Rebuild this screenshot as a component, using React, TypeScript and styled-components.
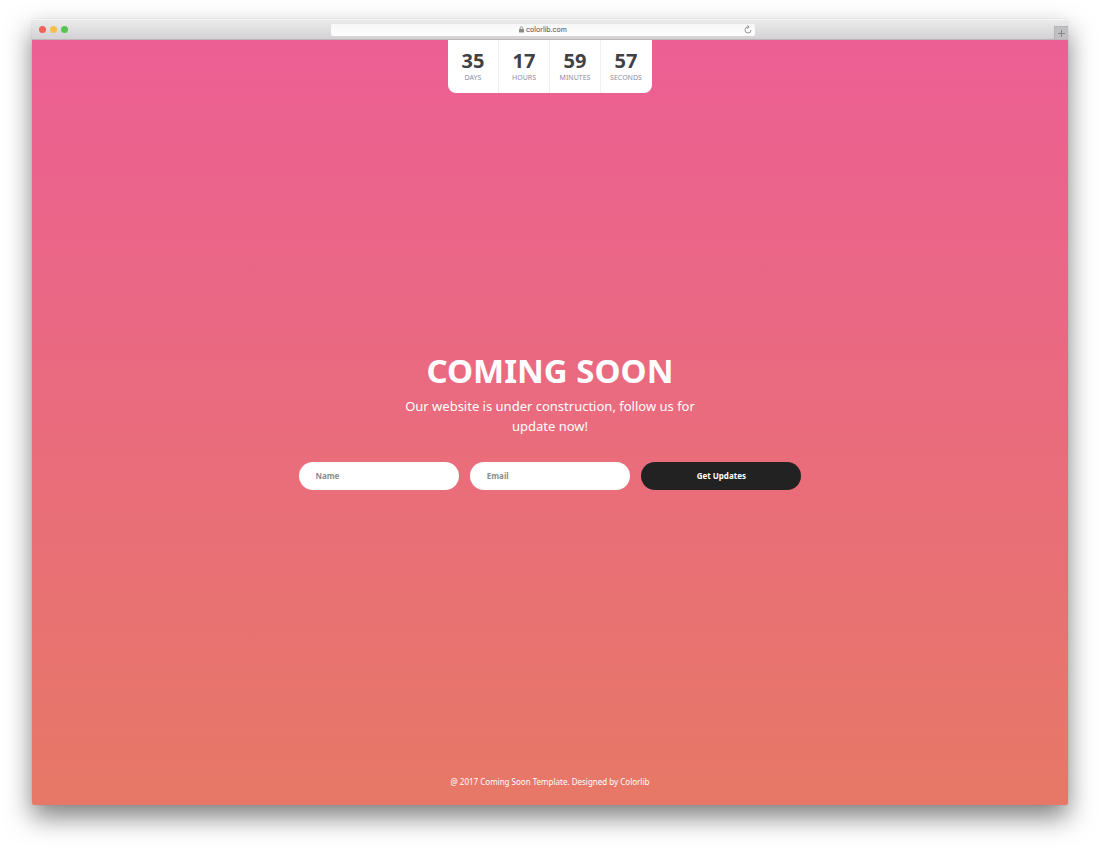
import React from "react";
import styled, { createGlobalStyle } from "styled-components";

const GlobalStyle = createGlobalStyle`
  *, *::before, *::after { box-sizing: border-box; }
  body {
    margin: 0;
    background: #fff;
    font-family: "Noto Sans", "Open Sans", sans-serif;
  }
`;

const Desktop = styled.div`
  display: flex;
  min-height: 100vh;
  padding: 19px 32px 46px;
`;

const BrowserWindow = styled.div`
  display: flex;
  flex: 1;
  flex-direction: column;
  border-radius: 1px 1px 2px 2px;
  box-shadow: 0 12px 26px rgba(0, 0, 0, 0.5), 0 0 1px rgba(0, 0, 0, 0.3);
`;

const TitleBar = styled.header`
  display: grid;
  grid-template-columns: 1fr minmax(0, 424px) 1fr 14px;
  align-items: center;
  height: 21px;
  background: linear-gradient(#ebebec, #d2d2d4);
  border-top: 1px solid #f6f6f6;
  border-bottom: 1px solid #bdb4b8;
`;

const Lights = styled.div`
  display: flex;
  gap: 4px;
  padding-left: 7px;
`;

const Light = styled.span<{ $color: string }>`
  width: 7px;
  height: 7px;
  border-radius: 50%;
  background: ${(p) => p.$color};
`;

const AddressBar = styled.div`
  display: grid;
  grid-template-columns: 1fr auto 1fr;
  align-items: center;
  height: 12px;
  padding: 0 3px;
  border-radius: 2px;
  background: linear-gradient(#f7f7f7, #fdfdfd);
  color: #4c4c4c;
  font: 7px/12px "Inter", sans-serif;
`;

const Address = styled.span`
  display: flex;
  grid-column: 2;
  align-items: center;
  gap: 2px;
`;

const ChromeButton = styled.button`
  display: flex;
  align-items: center;
  justify-content: center;
  justify-self: end;
  padding: 0;
  border: 0;
  background: none;
`;

const NewTabButton = styled(ChromeButton)`
  grid-column: 4;
  align-self: end;
  width: 14px;
  height: 13px;
  border: 1px solid #b4b4b6;
  border-width: 1px 0 0 1px;
  background: #c0c0c2;
`;

const Page = styled.div`
  display: flex;
  flex: 1;
  flex-direction: column;
  align-items: center;
  border-radius: 0 0 2px 2px;
  background: linear-gradient(#ec5f94, #e77866);
  color: #fff;
`;

const Countdown = styled.div`
  display: grid;
  grid-template-columns: repeat(4, 51px);
  height: 53px;
  overflow: hidden;
  border-radius: 0 0 8px 8px;
  background: #fff;
`;

const Unit = styled.div`
  padding-top: 9px;
  border-right: 1px solid #f0f0f0;
  text-align: center;

  &:last-child { border-right-color: transparent; }
`;

const Amount = styled.div`
  color: #3f4144;
  font-size: 20px;
  font-weight: 700;
  line-height: 24px;
`;

const UnitName = styled.div`
  color: #8a8fa5;
  font-size: 7px;
  line-height: 10px;
  text-transform: uppercase;
`;

const Main = styled.main`
  display: flex;
  flex: 1;
  flex-direction: column;
  align-items: center;
  justify-content: center;
  width: 100%;
  padding: 0 16px 7px;
  text-align: center;
`;

const Title = styled.h1`
  margin: 0;
  font-size: 33px;
  font-weight: 700;
  line-height: 44px;
`;

const Lead = styled.p`
  max-width: 320px;
  margin: 3px 0 26px;
  font-size: 13px;
  line-height: 20px;
`;

const SignupForm = styled.form`
  display: grid;
  grid-template-columns: repeat(3, 1fr);
  gap: 11px;
  width: 100%;
  max-width: 503px;
`;

const Field = styled.input`
  width: 100%;
  min-width: 0;
  height: 28px;
  padding: 0 17px;
  border: 0;
  border-radius: 14px;
  background: #fff;
  color: #333;
  font: 700 8px/12px "Noto Sans", sans-serif;

  &::placeholder { color: #8c8c8c; opacity: 1; }
`;

const SubmitButton = styled.button`
  height: 28px;
  padding: 0;
  border: 0;
  border-radius: 14px;
  background: #222;
  color: #fff;
  font: 700 8px/12px "Noto Sans", sans-serif;
`;

const Footer = styled.footer`
  padding: 24px 16px 17px;
  font-size: 8px;
  line-height: 12px;
`;

const FooterLink = styled.a`
  color: inherit;
  text-decoration: none;
`;

const units = [
  { amount: 35, name: "Days" },
  { amount: 17, name: "Hours" },
  { amount: 59, name: "Minutes" },
  { amount: 57, name: "Seconds" },
];

const LockIcon = () => (
  <svg width="5" height="7" viewBox="0 0 5 7" aria-hidden="true">
    <path d="M1.2 3V2a1.3 1.3 0 0 1 2.6 0v1" fill="none" stroke="#888" strokeWidth=".8" />
    <rect y="3" width="5" height="3.4" rx=".4" fill="#888" />
  </svg>
);

const ReloadIcon = () => (
  <svg width="8" height="9" viewBox="0 0 8 9" fill="none" stroke="#777" strokeWidth=".8" aria-hidden="true">
    <path d="M4.6 2A3 3 0 1 0 7 5M3.4.4l1.7 1.6-1.7 1.5" />
  </svg>
);

const PlusIcon = () => (
  <svg width="7" height="7" viewBox="0 0 7 7" stroke="#858588" aria-hidden="true">
    <path d="M3.5 0v7M0 3.5h7" />
  </svg>
);

export default function App() {
  return (
    <>
      <GlobalStyle />
      <Desktop>
        <BrowserWindow>
          <TitleBar>
            <Lights>
              <Light $color="#ee6258" />
              <Light $color="#f5bf4b" />
              <Light $color="#5bc353" />
            </Lights>
            <AddressBar>
              <Address>
                <LockIcon />
                colorlib.com
              </Address>
              <ChromeButton type="button" aria-label="Reload">
                <ReloadIcon />
              </ChromeButton>
            </AddressBar>
            <NewTabButton type="button" aria-label="New tab">
              <PlusIcon />
            </NewTabButton>
          </TitleBar>
          <Page>
            <Countdown>
              {units.map((unit) => (
                <Unit key={unit.name}>
                  <Amount>{unit.amount}</Amount>
                  <UnitName>{unit.name}</UnitName>
                </Unit>
              ))}
            </Countdown>
            <Main>
              <Title>COMING SOON</Title>
              <Lead>
                Our website is under construction, follow us for update now!
              </Lead>
              <SignupForm onSubmit={(event) => event.preventDefault()}>
                <Field type="text" placeholder="Name" aria-label="Name" />
                <Field type="email" placeholder="Email" aria-label="Email" />
                <SubmitButton type="submit">Get Updates</SubmitButton>
              </SignupForm>
            </Main>
            <Footer>
              @ 2017 Coming Soon Template. Designed by{" "}
              <FooterLink href="#colorlib">Colorlib</FooterLink>
            </Footer>
          </Page>
        </BrowserWindow>
      </Desktop>
    </>
  );
}
